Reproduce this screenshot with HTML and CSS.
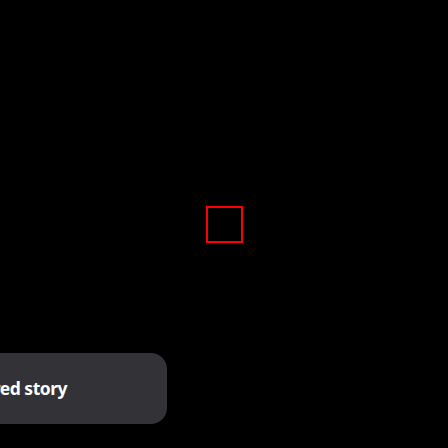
FILE: index.html
```html
<!DOCTYPE html>
<html>
<head>
<meta charset="utf-8">
<link rel="stylesheet" href="styles.css">
</head>
<body>
<div class="stage">
  <div class="focus-box"></div>
</div>
<div class="toast"><span class="toast-text">Shared story</span></div>
</body>
</html>
```
FILE: styles.css
```css
html, body {
  margin: 0;
  padding: 0;
  background: #000;
  width: 448px;
  height: 448px;
  overflow: hidden;
  font-family: "Noto Sans", "Open Sans", sans-serif;
}
.stage {
  width: 448px;
  height: 448px;
  display: flex;
  justify-content: flex-start;
  align-items: flex-start;
  padding: 206px 0 0 206px;
  box-sizing: border-box;
}
.focus-box {
  width: 37px;
  height: 37px;
  box-sizing: border-box;
  border: 2px solid #ff0000;
}
.toast {
  position: absolute;
  top: 353px;
  left: -200px;
  width: 367px;
  height: 71px;
  background: #323237;
  border-radius: 16px;
  display: flex;
  align-items: center;
  justify-content: flex-end;
  padding-right: 100px;
  box-sizing: border-box;
}
.toast-text {
  color: #fff;
  font-weight: 700;
  font-size: 17.5px;
  letter-spacing: -0.5px;
  white-space: nowrap;
  position: relative;
  top: -1px;
}
```
